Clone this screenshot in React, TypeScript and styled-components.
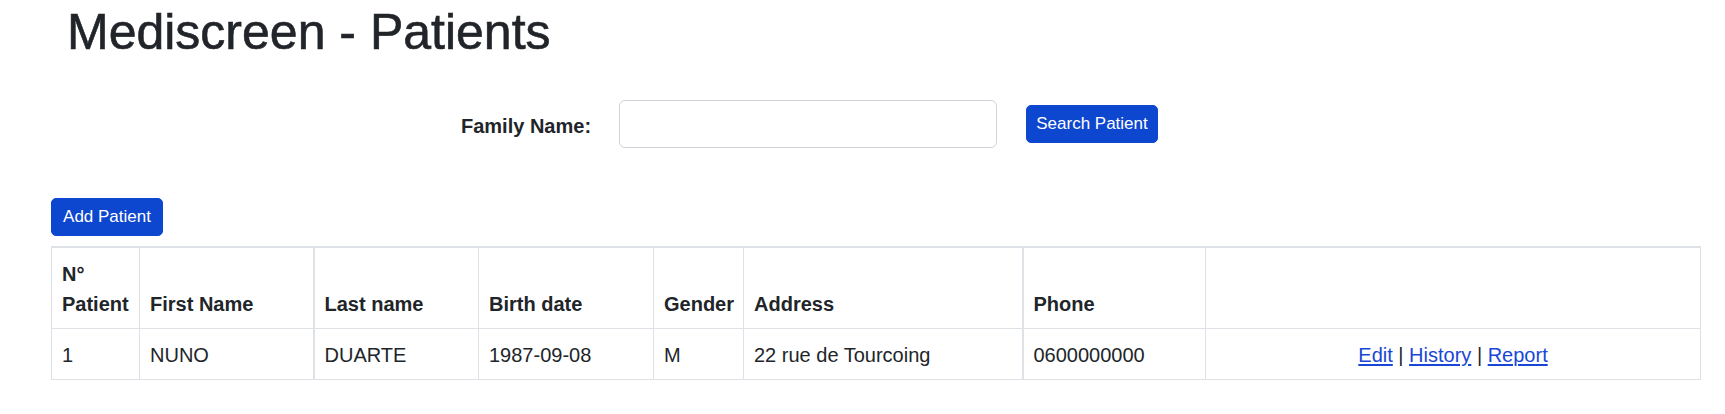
import React from "react";
import styled, { createGlobalStyle } from "styled-components";

const GlobalStyle = createGlobalStyle`
  html, body {
    margin: 0;
    padding: 0;
    background: #ffffff;
  }
  body {
    font-family: "Liberation Sans", Arial, sans-serif;
    color: #212529;
    font-size: 20px;
    line-height: 1.5;
  }
  * { box-sizing: border-box; }
`;

const Page = styled.main`
  padding: 0 25px 0 51px;
  display: flex;
  flex-direction: column;
  align-items: flex-start;
`;

const Title = styled.h1`
  margin: 2px 0 0 16px;
  font-size: 50px;
  line-height: 60px;
  font-weight: 500;
  color: #212529;
  -webkit-text-stroke: 0.6px #212529;
`;

const SearchForm = styled.form`
  display: flex;
  align-items: center;
  margin-top: 38px;
  padding-left: 410px;
  height: 48px;
`;

const Label = styled.label`
  width: 158px;
  font-weight: 700;
  font-size: 20px;
  line-height: 30px;
  margin-top: 4px;
`;

const Input = styled.input`
  width: 378px;
  height: 48px;
  border: 1px solid #ced4da;
  border-radius: 6px;
  padding: 0 15px;
  font: inherit;
  background: #fff;
`;

const Button = styled.button<{ $width: number }>`
  width: ${(p) => p.$width}px;
  height: 38px;
  padding: 0;
  border: 1px solid #0d46cf;
  border-radius: 5px;
  background: #0d46cf;
  color: #ffffff;
  font-family: "Liberation Sans", Arial, sans-serif;
  font-size: 17px;
  line-height: 26px;
  text-align: center;
  cursor: pointer;
`;

const SearchButton = styled(Button)`
  margin-left: 29px;
`;

const AddButton = styled(Button)`
  margin-top: 50px;
  margin-bottom: 10px;
`;

const Table = styled.table`
  width: 1649px;
  table-layout: fixed;
  border-collapse: collapse;
  border: 1px solid #dee2e6;
`;

const Col = styled.col<{ $w: number }>`
  width: ${(p) => p.$w}px;
`;

const Th = styled.th<{ $thick?: boolean }>`
  border: 1px solid #dee2e6;
  border-top-width: 2px;
  border-left-width: ${(p) => (p.$thick ? 2 : 1)}px;
  padding: 11px 10px 9px;
  text-align: left;
  vertical-align: bottom;
  font-weight: 700;
  font-size: 20px;
  line-height: 30px;
  height: 81px;
`;

const Td = styled.td<{ $thick?: boolean; $center?: boolean }>`
  border: 1px solid #dee2e6;
  border-left-width: ${(p) => (p.$thick ? 2 : 1)}px;
  padding: 11px 10px 9px;
  text-align: ${(p) => (p.$center ? "center" : "left")};
  vertical-align: top;
  font-size: 20px;
  line-height: 30px;
  white-space: nowrap;
`;

const Link = styled.a`
  color: #1846d6;
  text-decoration: underline;
  text-underline-offset: 2px;
`;

const columns = [
  { key: "id", label: <>N°<br />Patient</>, w: 88 },
  { key: "first", label: "First Name", w: 174 },
  { key: "last", label: "Last name", w: 165, thick: true },
  { key: "birth", label: "Birth date", w: 175 },
  { key: "gender", label: "Gender", w: 90 },
  { key: "address", label: "Address", w: 279 },
  { key: "phone", label: "Phone", w: 183, thick: true },
  { key: "actions", label: "", w: 495 },
];

const patients = [
  {
    id: "1",
    first: "NUNO",
    last: "DUARTE",
    birth: "1987-09-08",
    gender: "M",
    address: "22 rue de Tourcoing",
    phone: "0600000000",
  },
];

export default function App() {
  return (
    <>
      <GlobalStyle />
      <Page>
        <Title>Mediscreen - Patients</Title>
        <SearchForm onSubmit={(e) => e.preventDefault()}>
          <Label htmlFor="family">Family Name:</Label>
          <Input id="family" type="text" />
          <SearchButton type="submit" $width={132}>Search Patient</SearchButton>
        </SearchForm>
        <AddButton type="button" $width={112}>Add Patient</AddButton>
        <Table>
          <colgroup>
            {columns.map((c) => (
              <Col key={c.key} $w={c.w} />
            ))}
          </colgroup>
          <thead>
            <tr>
              {columns.map((c) => (
                <Th key={c.key} $thick={c.thick}>{c.label}</Th>
              ))}
            </tr>
          </thead>
          <tbody>
            {patients.map((p) => (
              <tr key={p.id}>
                <Td>{p.id}</Td>
                <Td>{p.first}</Td>
                <Td $thick>{p.last}</Td>
                <Td>{p.birth}</Td>
                <Td>{p.gender}</Td>
                <Td>{p.address}</Td>
                <Td $thick>{p.phone}</Td>
                <Td $center>
                  <Link href="#">Edit</Link> | <Link href="#">History</Link> |{" "}
                  <Link href="#">Report</Link>
                </Td>
              </tr>
            ))}
          </tbody>
        </Table>
      </Page>
    </>
  );
}
